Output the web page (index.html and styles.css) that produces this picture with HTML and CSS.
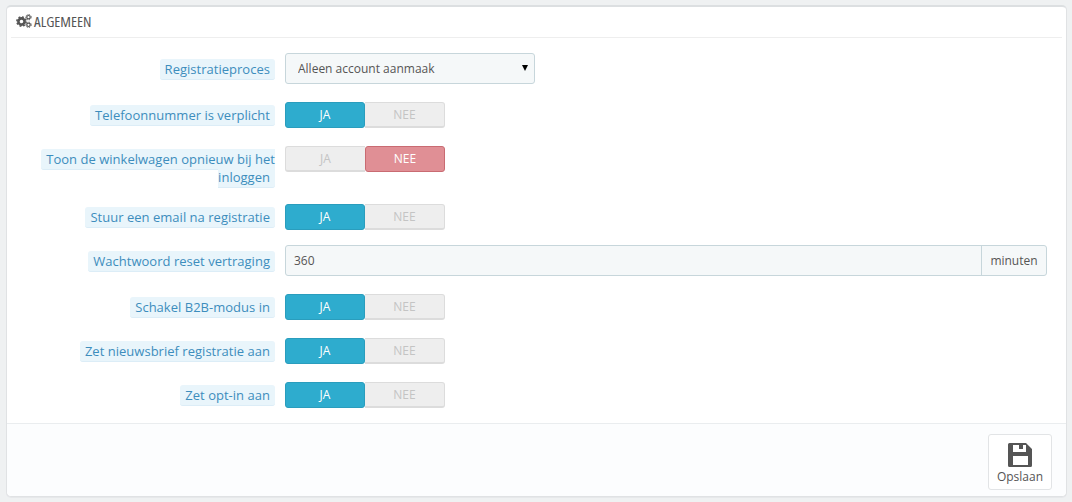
FILE: index.html
```html
<!DOCTYPE html>
<html lang="nl">
<head>
<meta charset="utf-8">
<title>Algemeen</title>
<link rel="stylesheet" href="styles.css">
</head>
<body>
<form class="panel">
  <div class="panel-heading">
    <svg class="gears" viewBox="0 0 16 14" width="16" height="14" aria-hidden="true">
      <g fill="none" stroke="#555" stroke-linecap="butt">
        <circle cx="5.5" cy="7.5" r="3.1" stroke-width="2.6"/>
        <circle cx="5.5" cy="7.5" r="4.6" stroke-width="1.6" stroke-dasharray="1.9 1.7"/>
        <circle cx="12.5" cy="3.2" r="1.7" stroke-width="1.2"/>
        <circle cx="12.5" cy="3.2" r="2.7" stroke-width="1" stroke-dasharray="1.3 1.2"/>
        <circle cx="12.5" cy="10.8" r="1.7" stroke-width="1.2"/>
        <circle cx="12.5" cy="10.8" r="2.7" stroke-width="1" stroke-dasharray="1.3 1.2"/>
      </g>
    </svg>
    <span class="title">ALGEMEEN</span>
  </div>
  <div class="form-wrapper">
    <div class="form-group">
      <div class="label-col field-label"><span class="hint">Registratieproces</span></div>
      <div class="select-wrap"><select class="select"><option>Alleen account aanmaak</option></select></div>
    </div>
    <div class="form-group">
      <div class="label-col"><span class="hint">Telefoonnummer is verplicht</span></div>
      <div class="switch"><span class="opt on-yes">JA</span><span class="opt">NEE</span></div>
    </div>
    <div class="form-group">
      <div class="label-col"><span class="hint">Toon de winkelwagen opnieuw bij het inloggen</span></div>
      <div class="switch"><span class="opt">JA</span><span class="opt on-no">NEE</span></div>
    </div>
    <div class="form-group tight">
      <div class="label-col"><span class="hint">Stuur een email na registratie</span></div>
      <div class="switch"><span class="opt on-yes">JA</span><span class="opt">NEE</span></div>
    </div>
    <div class="form-group">
      <div class="label-col field-label"><span class="hint">Wachtwoord reset vertraging</span></div>
      <div class="input-group"><input class="input" type="text" value="360"><span class="addon">minuten</span></div>
    </div>
    <div class="form-group">
      <div class="label-col"><span class="hint">Schakel B2B-modus in</span></div>
      <div class="switch"><span class="opt on-yes">JA</span><span class="opt">NEE</span></div>
    </div>
    <div class="form-group">
      <div class="label-col"><span class="hint">Zet nieuwsbrief registratie aan</span></div>
      <div class="switch"><span class="opt on-yes">JA</span><span class="opt">NEE</span></div>
    </div>
    <div class="form-group tight">
      <div class="label-col"><span class="hint">Zet opt-in aan</span></div>
      <div class="switch"><span class="opt on-yes">JA</span><span class="opt">NEE</span></div>
    </div>
  </div>
  <div class="panel-footer">
    <button class="save" type="button">
      <svg viewBox="0 0 24 24" width="24" height="24" aria-hidden="true">
        <path fill="#555" fill-rule="evenodd" d="M1.500 0H18l6 6v16.500a1.500 1.500 0 0 1-1.500 1.500H1.500A1.500 1.500 0 0 1 0 22.500V1.500A1.500 1.500 0 0 1 1.500 0ZM5 2V9H18V2H15V6H11V2ZM5 13V22H20V13Z"/>
      </svg>
      <span>Opslaan</span>
    </button>
  </div>
</form>
</body>
</html>
```
FILE: styles.css
```css
* { box-sizing: border-box; }
html, body { height: 100%; }
body {
  margin: 0;
  padding: 5px 5px 5px 6px;
  background: #eff1f2;
  font-family: "Open Sans", sans-serif;
  font-size: 13px;
  line-height: 18px;
  color: #555;
}
.panel {
  height: 492px;
  background: #fff;
  border: 1px solid #e0e2e4;
  border-top: 2px solid #dcdfe1;
  border-radius: 5px;
  box-shadow: 0 1px 0 #e6e8ea;
  display: flex;
  flex-direction: column;
}
.panel-heading {
  margin: 0 4px;
  padding: 0 0 2px 5px;
  height: 31px;
  flex: none;
  border-bottom: 1px solid #eeeeee;
  display: flex;
  align-items: center;
  gap: 2px;
  color: #555;
}
.title {
  font-family: "Open Sans", sans-serif;
  font-stretch: 75%;
  font-size: 15px;
}
.gears { flex: none; }
.form-wrapper {
  flex: 1;
  padding: 15px 19px 0 0;
  display: flex;
  flex-direction: column;
}
.form-group {
  display: grid;
  grid-template-columns: 268px 1fr;
  column-gap: 10px;
  align-items: start;
  margin-bottom: 18px;
}
.form-group.tight { margin-bottom: 15px; }
.label-col {
  text-align: right;
  padding-top: 4px;
  padding-left: 30px;
}
.label-col.field-label { padding-top: 7px; }
.hint {
  padding: 1px 5px;
  background: #e9f5fb;
  color: #3d8dbd;
  border-radius: 3px;
  letter-spacing: 0.02px;
  border-bottom: 1px solid #dcedf7;
}
.select-wrap {
  position: relative;
  width: 250px;
}
.select-wrap::after {
  content: "";
  position: absolute;
  top: 12px;
  right: 7px;
  border-style: solid;
  border-width: 6px 3px 0;
  border-color: #000 transparent transparent;
  pointer-events: none;
}
.select {
  display: block;
  width: 100%;
  height: 31px;
  padding: 0 12px;
  appearance: none;
  background-color: #f5f8f9;
  border: 1px solid #c7d6db;
  border-radius: 3px;
  font: inherit;
  font-size: 12px;
  color: #555;
}
.switch {
  display: grid;
  grid-template-columns: 80px 80px;
  width: 160px;
  height: 26px;
  font-size: 12px;
}
.opt {
  display: flex;
  align-items: center;
  justify-content: center;
  background: #eeeeee;
  border: 1px solid #dcdcdc;
  border-bottom-width: 2px;
  color: #c4c4c4;
}
.opt:first-child { border-radius: 3px 0 0 3px; border-right: 0; }
.opt:last-child { border-radius: 0 3px 3px 0; border-left: 0; }
.opt.on-yes {
  background: #2eacce;
  border: 1px solid #2a9dbd;
  border-radius: 3px;
  color: #fff;
}
.opt.on-no {
  background: #e08f95;
  border: 1px solid #c96b72;
  border-radius: 3px;
  color: #fff;
}
.input-group {
  display: flex;
  height: 31px;
  background: #f5f8f9;
  border: 1px solid #c7d6db;
  border-radius: 3px;
  font-size: 12px;
}
.input {
  flex: 1;
  min-width: 0;
  padding: 0 8px;
  border: 0;
  background: transparent;
  font: inherit;
  color: #555;
}
.addon {
  flex: none;
  width: 65px;
  border-left: 1px solid #c7d6db;
  display: flex;
  align-items: center;
  justify-content: center;
}
.panel-footer {
  height: 73px;
  flex: none;
  background: #fcfdfe;
  border-top: 1px solid #eaedef;
  border-radius: 0 0 5px 5px;
  padding: 10px 14px 0 0;
  display: flex;
  justify-content: flex-end;
  align-items: flex-start;
}
.save {
  width: 64px;
  height: 56px;
  padding: 8px 0 0;
  background: #fff;
  border: 1px solid #e2e4e6;
  border-radius: 3px;
  font: inherit;
  font-size: 12px;
  line-height: 16px;
  color: #555;
  display: flex;
  flex-direction: column;
  align-items: center;
  gap: 2px;
}
```
